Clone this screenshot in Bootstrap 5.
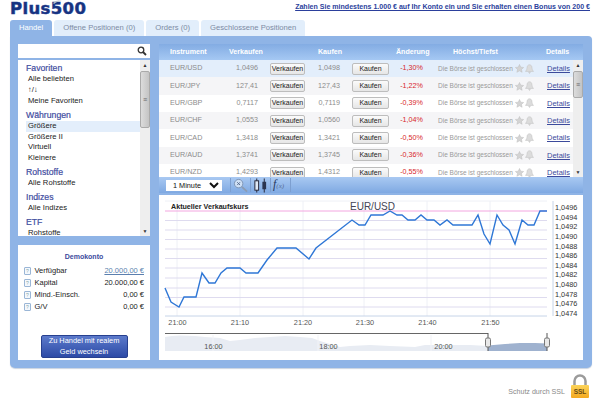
<!DOCTYPE html>
<html lang="de"><head><meta charset="utf-8"><title>Plus500</title>
<link rel="stylesheet" href="https://cdn.jsdelivr.net/npm/bootstrap@5.3.0/dist/css/bootstrap.min.css">
<style>
html,body{height:403px;overflow:hidden;background:#fff}
body{font-family:"Liberation Sans",Arial,sans-serif;font-size:7.5px;color:#222;line-height:1.2}
.topbar{height:20px;padding:0 10px 0 10px}
.logo-word{font-family:"DejaVu Sans",sans-serif;font-weight:700;font-size:16.5px;line-height:16px;letter-spacing:.35px;color:#17337f;-webkit-text-stroke:.5px #1b3b90;transform:translateY(-1px);position:relative}
.logo-swoosh{position:absolute;left:43px;top:-2px}
.promo{font-weight:700;font-size:7.05px;color:#2b3f9c;text-decoration:underline;margin-top:-5px}
.tabsrow{margin:0 0 0 10px;gap:2px;border:0;height:16px}
.tabsrow .nav-link{padding:0 9px;height:16px;line-height:16px;font-size:7.65px;color:#7d8ba3;background:#e2eefb;border:0;border-radius:3px 3px 0 0}
.tabsrow .nav-link.active{color:#fff;background:#8fb4e6}
.shell{margin:0 8px 0 10px;height:332px;background:#8fb4e6;border-radius:0 4px 5px 5px;padding:8px 9px 8px 8px;gap:9px;box-shadow:0 1px 1px #c9d3e0}
.leftcol{width:132px;gap:9px}
.searchbox{height:14px;background:#fff;padding-right:3px}
.marketlist{height:176px;margin-top:2px;background:#fff}
.marketscroll{padding:0 0 0 8px;flex:1;overflow:hidden}
.mk-head{font-size:8.7px;line-height:12px;color:#3f4d9f;-webkit-text-stroke:.2px #3f4d9f;margin-top:2.4px}
.mk-item{font-size:7.65px;line-height:10.7px;padding-left:2px;color:#222}
.mk-item.chosen{background:#e3eefb}
.vscroll{width:10px;background:#eeeeee;gap:1px}
.vscroll .arr{height:10px;font-size:5px;line-height:10px;text-align:center;color:#333}
.vthumb{background:linear-gradient(90deg,#dcdcdc,#c4c4c4);border:1px solid #aaa;border-radius:2px;color:#666;font-size:7px;line-height:7px}
.demo{flex:1;background:#fff;padding:7px 6px 2px 6px}
.demo h6{font-size:7px;font-weight:700;color:#3c4a9c;text-align:center;margin:0 0 3px;line-height:10px}
.demo-row{height:12px;font-size:7.5px;line-height:12px}
.qm{width:7px;height:8px;border:1px solid #9ab6d6;border-radius:1px;font-size:5px;line-height:6px;text-align:center;color:#8aa;margin-right:3.5px;background:#f4f8fd}
.demo-link{color:#5b7fae;text-decoration:underline}
.realbtn{width:87px;height:23px;padding:0;font-size:7.4px;line-height:10.5px;color:#fff;background:linear-gradient(#5c7acb,#2c4aa6);border:1px solid #27408f;border-radius:2px}
.realbtn:hover{color:#fff}
.rightcol{flex:1;min-width:0}
.headband{height:16px;background:linear-gradient(#83ace3,#a5c8f3);color:#fff;font-weight:700;font-size:7.1px;line-height:16px}
.hc1{margin-left:11px;width:59px}.hc2{width:89px}.hc3{width:78px}.hc4{width:57px}.hc5{width:93px}
.rates{height:117px;background:#fff;overflow:hidden}
.ratestable{margin:0;table-layout:fixed;width:414px;--bs-table-bg:transparent;--bs-border-width:0}
.ratestable td{padding:0;height:17.35px;vertical-align:middle;font-size:7.2px;color:#8c8c8c;border:0;white-space:nowrap;background:transparent;box-shadow:none}
.ratestable tr:nth-child(even) td{background:#f5f5f7}
.ratestable tr:first-child td{background:#e3eefb}
.ratestable td.pr{text-align:right;padding-right:6px}
.ratestable td.pr2{text-align:right;padding-right:7px}
.ratestable td.ins{padding-left:11px}
.ratestable td.chg{color:#d8262c;text-align:right;padding-right:12px}
.ratestable td.stat{font-size:6.5px;color:#999;padding-left:3px}
.ratestable td.det a{color:#3c4a9c;text-decoration:underline;font-size:7.5px}
.tradebtn{height:12px;line-height:10px;padding:0;font-size:7px;color:#222;background:linear-gradient(#fbfbfb,#e6e6e6);border:1px solid #bdbdbd;border-radius:2px;display:block}
.sellb{width:35px;margin-left:6px}.buyb{width:37px;margin-left:5px}
.tools{height:16px;background:linear-gradient(#a9c9f2,#7fa9e2);padding:0 0 0 7px;margin-bottom:2px}
.tfsel{width:56px;height:11px;font-size:7.3px;line-height:9px;padding:0 0 0 3px;border:0;border-radius:0;background-color:#fff;color:#111;font-family:inherit}
.tsep{width:1px;height:14px;background:#7d9fd0;margin:0 2px}
.fxmark{font-family:"Liberation Serif",serif;font-style:italic;font-size:12px;color:#26385c;line-height:14px;width:15px;white-space:nowrap}
.fxmark span{font-size:7px;color:#5a6f96}
.chartbox{flex:1;background:#fff;overflow:hidden}
.chartbox svg{display:block}
.chartbox text{font-family:"Liberation Sans",Arial,sans-serif}
.footline{height:35px;padding:6px 10px 0 0;gap:5px;color:#8a8a8a;font-size:7.1px}
.ssltext{margin-top:14px}
</style></head>
<body>
<svg width="0" height="0" class="d-none"><defs>
<symbol id="ic-star" viewBox="0 0 10 10"><path d="M5 .5l1.400 3 3.200.4-2.400 2.100.7 3.200L5 7.600 2.100 9.200l.7-3.200L.4 3.900l3.200-.4z" fill="#d4d4d4" stroke="#bbb" stroke-width=".5"/></symbol>
<symbol id="ic-bell" viewBox="0 0 10 11"><path d="M5 .8c2 0 2.800 1.700 2.800 3.700 0 2 1.200 3 1.700 3.700H.5C1 7.500 2.200 6.500 2.200 4.500 2.200 2.500 3 .8 5 .8zM4 9h2l-1 1.500z" fill="#dcdcdc" stroke="#bbb" stroke-width=".5"/></symbol>
</defs></svg>
<div class="topbar d-flex justify-content-between align-items-center">
  <div class="logo-word">Plus500<svg class="logo-swoosh" width="9" height="5" viewBox="0 0 9 5"><path d="M0 4C3 1 6 1 9 2 6 2 3 3 1 5z" fill="#b9bec6"/></svg></div>
  <a class="promo" href="#">Zahlen Sie mindestens 1.000 € auf Ihr Konto ein und Sie erhalten einen Bonus von 200 €</a>
</div>
<ul class="nav nav-tabs tabsrow">
  <li class="nav-item"><a class="nav-link active" href="#">Handel</a></li>
  <li class="nav-item"><a class="nav-link" href="#">Offene Positionen (0)</a></li>
  <li class="nav-item"><a class="nav-link" href="#">Orders (0)</a></li>
  <li class="nav-item"><a class="nav-link" href="#">Geschlossene Positionen</a></li>
</ul>
<div class="shell d-flex">
  <div class="leftcol d-flex flex-column">
    <div>
      <div class="searchbox d-flex justify-content-end align-items-center">
        <svg width="10" height="10" viewBox="0 0 10 10"><circle cx="4" cy="4" r="2.800" fill="none" stroke="#333" stroke-width="1.300"/><path d="M6 6l3 3" stroke="#333" stroke-width="1.800"/></svg>
      </div>
      <div class="marketlist d-flex">
        <div class="marketscroll">
          <div class="mk-head">Favoriten</div>
          <div class="mk-item">Alle beliebten</div>
          <div class="mk-item">↑/↓</div>
          <div class="mk-item">Meine Favoriten</div>
          <div class="mk-head">Währungen</div>
          <div class="mk-item chosen">Größere</div>
          <div class="mk-item">Größere II</div>
          <div class="mk-item">Virtuell</div>
          <div class="mk-item">Kleinere</div>
          <div class="mk-head">Rohstoffe</div>
          <div class="mk-item">Alle Rohstoffe</div>
          <div class="mk-head">Indizes</div>
          <div class="mk-item">Alle Indizes</div>
          <div class="mk-head">ETF</div>
          <div class="mk-item">Rohstoffe</div>
        </div>
        <div class="vscroll d-flex flex-column">
          <div class="arr">▲</div>
          <div class="vthumb d-flex align-items-center justify-content-center" style="height:57px">≡</div>
          <div class="flex-grow-1"></div>
          <div class="arr">▼</div>
        </div>
      </div>
    </div>
    <div class="demo d-flex flex-column">
      <h6>Demokonto</h6>
      <div class="demo-row d-flex align-items-center"><span class="qm">?</span><span class="flex-grow-1">Verfügbar</span><a class="demo-link" href="#">20.000,00 €</a></div>
      <div class="demo-row d-flex align-items-center"><span class="qm">?</span><span class="flex-grow-1">Kapital</span><span>20.000,00 €</span></div>
      <div class="demo-row d-flex align-items-center"><span class="qm">?</span><span class="flex-grow-1">Mind.-Einsch.</span><span>0,00 €</span></div>
      <div class="demo-row d-flex align-items-center"><span class="qm">?</span><span class="flex-grow-1">G/V</span><span>0,00 €</span></div>
      <div class="mt-auto text-center"><button class="btn realbtn" type="button">Zu Handel mit realem<br>Geld wechseln</button></div>
    </div>
  </div>
  <div class="rightcol d-flex flex-column">
    <div class="headband d-flex">
      <span class="hc1">Instrument</span><span class="hc2">Verkaufen</span><span class="hc3">Kaufen</span><span class="hc4">Änderung</span><span class="hc5">Höchst/Tiefst</span><span>Details</span>
    </div>
    <div class="rates d-flex">
      <table class="table ratestable">
        <colgroup><col style="width:67px"><col style="width:38px"><col style="width:46px"><col style="width:37px"><col style="width:46px"><col style="width:42px"><col style="width:112px"><col style="width:26px"></colgroup>
        <tbody>
        <tr><td class="ins">EUR/USD</td><td class="pr">1,0496</td><td><button class="btn tradebtn sellb" type="button">Verkaufen</button></td><td class="pr2">1,0498</td><td><button class="btn tradebtn buyb" type="button">Kaufen</button></td><td class="chg">-1,30%</td><td class="stat">Die Börse ist geschlossen <svg width="9" height="9"><use href="#ic-star"/></svg> <svg width="9" height="10"><use href="#ic-bell"/></svg></td><td class="det"><a href="#">Details</a></td></tr>
        <tr><td class="ins">EUR/JPY</td><td class="pr">127,41</td><td><button class="btn tradebtn sellb" type="button">Verkaufen</button></td><td class="pr2">127,43</td><td><button class="btn tradebtn buyb" type="button">Kaufen</button></td><td class="chg">-1,22%</td><td class="stat">Die Börse ist geschlossen <svg width="9" height="9"><use href="#ic-star"/></svg> <svg width="9" height="10"><use href="#ic-bell"/></svg></td><td class="det"><a href="#">Details</a></td></tr>
        <tr><td class="ins">EUR/GBP</td><td class="pr">0,7117</td><td><button class="btn tradebtn sellb" type="button">Verkaufen</button></td><td class="pr2">0,7119</td><td><button class="btn tradebtn buyb" type="button">Kaufen</button></td><td class="chg">-0,39%</td><td class="stat">Die Börse ist geschlossen <svg width="9" height="9"><use href="#ic-star"/></svg> <svg width="9" height="10"><use href="#ic-bell"/></svg></td><td class="det"><a href="#">Details</a></td></tr>
        <tr><td class="ins">EUR/CHF</td><td class="pr">1,0553</td><td><button class="btn tradebtn sellb" type="button">Verkaufen</button></td><td class="pr2">1,0560</td><td><button class="btn tradebtn buyb" type="button">Kaufen</button></td><td class="chg">-1,04%</td><td class="stat">Die Börse ist geschlossen <svg width="9" height="9"><use href="#ic-star"/></svg> <svg width="9" height="10"><use href="#ic-bell"/></svg></td><td class="det"><a href="#">Details</a></td></tr>
        <tr><td class="ins">EUR/CAD</td><td class="pr">1,3418</td><td><button class="btn tradebtn sellb" type="button">Verkaufen</button></td><td class="pr2">1,3421</td><td><button class="btn tradebtn buyb" type="button">Kaufen</button></td><td class="chg">-0,50%</td><td class="stat">Die Börse ist geschlossen <svg width="9" height="9"><use href="#ic-star"/></svg> <svg width="9" height="10"><use href="#ic-bell"/></svg></td><td class="det"><a href="#">Details</a></td></tr>
        <tr><td class="ins">EUR/AUD</td><td class="pr">1,3741</td><td><button class="btn tradebtn sellb" type="button">Verkaufen</button></td><td class="pr2">1,3745</td><td><button class="btn tradebtn buyb" type="button">Kaufen</button></td><td class="chg">-0,36%</td><td class="stat">Die Börse ist geschlossen <svg width="9" height="9"><use href="#ic-star"/></svg> <svg width="9" height="10"><use href="#ic-bell"/></svg></td><td class="det"><a href="#">Details</a></td></tr>
        <tr><td class="ins">EUR/NZD</td><td class="pr">1,4293</td><td><button class="btn tradebtn sellb" type="button">Verkaufen</button></td><td class="pr2">1,4312</td><td><button class="btn tradebtn buyb" type="button">Kaufen</button></td><td class="chg">-0,55%</td><td class="stat">Die Börse ist geschlossen <svg width="9" height="9"><use href="#ic-star"/></svg> <svg width="9" height="10"><use href="#ic-bell"/></svg></td><td class="det"><a href="#">Details</a></td></tr>
        </tbody>
      </table>
      <div class="vscroll d-flex flex-column">
        <div class="arr">▲</div>
        <div class="vthumb d-flex align-items-center justify-content-center" style="height:27px">≡</div>
        <div class="flex-grow-1"></div>
        <div class="arr">▼</div>
      </div>
    </div>
    <div class="tools d-flex align-items-center">
      <select class="tfsel"><option>1 Minute</option></select>
      <span class="tsep ms-2"></span>
      <svg width="15" height="15" viewBox="0 0 16 15"><circle cx="6" cy="5.500" r="4.500" fill="#cfe0f5" stroke="#7d93b3"/><path d="M4.500 4l3 3M7.500 4l-3 3" stroke="#55688a"/><path d="M9.500 9l5.500 5" stroke="#8c9cb3" stroke-width="2"/></svg>
      <span class="tsep"></span>
      <svg width="15" height="15" viewBox="0 0 16 15"><path d="M4 0v15M12 0v15" stroke="#223"/><rect x="2" y="2.500" width="4" height="10" fill="#dfe9f6" stroke="#223"/><rect x="10" y="3.500" width="4" height="8" fill="#2a3550"/></svg>
      <span class="tsep"></span>
      <span class="fxmark">f<span>(x)</span></span>
      <span class="tsep"></span>
    </div>
    <div class="chartbox">
      <svg width="424" height="165" viewBox="159 195 424 165">
        <g stroke="#eef0f6" fill="none"><path d="M177 201V316M240 201V316M303 201V316M364 201V316M427 201V316M490 201V316"/><path d="M165 201H547"/></g>
        <g stroke="#dedbef" fill="none"><path d="M165 220.500H547M165 230H547M165 239.500H547M165 249H547M165 258.500H547M165 268H547M165 278H547M165 288H547M165 297.500H547M165 307H547"/></g>
        <path d="M165 316H547M553 201V316" stroke="#c6d4e8" fill="none"/>
        <path d="M165 211H547" stroke="#f3a6e0"/>
        <polyline fill="none" stroke="#2f77d6" stroke-width="1.400" points="165,288 171,302 179,307 184,297 196,297 202,273 209,283 215,283 221,273 227,268 240,268 246,273 258,273 267,260 277,248 296,248 309,259 316,248 352,220 359,225 365,225 371,215 383,215 390,211 397,215 402,215 408,220 415,220 421,215 427,220 434,220 440,225 447,220 453,225 472,225 478,215 484,234 490,244 497,215 503,225 509,230 515,244 522,220 528,225 534,225 540,211 547,211"/>
        <text x="171" y="209" font-size="7.150" font-weight="700" fill="#222">Aktueller Verkaufskurs</text>
        <text x="350" y="210" font-size="10" fill="#445">EUR/USD</text>
        <g font-size="7.300" fill="#333">
          <text x="555" y="210">1,0496</text><text x="555" y="219.700">1,0494</text><text x="555" y="229.300">1,0492</text><text x="555" y="238.900">1,0490</text><text x="555" y="248.500">1,0488</text><text x="555" y="258.200">1,0486</text><text x="555" y="267.800">1,0484</text><text x="555" y="277.400">1,0482</text><text x="555" y="287">1,0480</text><text x="555" y="296.600">1,0478</text><text x="555" y="306.200">1,0476</text><text x="555" y="315.800">1,0474</text>
        </g>
        <g font-size="7.300" fill="#555" text-anchor="middle">
          <text x="177.500" y="325">21:00</text><text x="240" y="325">21:10</text><text x="303" y="325">21:20</text><text x="365" y="325">21:30</text><text x="427.500" y="325">21:40</text><text x="490.500" y="325">21:50</text>
        </g>
        <path d="M165 337L172 336 180 335.500 195 336 205 337 220 338 230 341 240 340 255 338 270 337 285 336 300 337 312 338 320 341 340 347 350 346 370 345 390 346 415 347 425 345 450 345 470 345 488 346V351H165z" fill="#e8ecf3"/>
        <path d="M488 345.500L505 344 520 343 535 343 547 343.500V351H488z" fill="#9fb2cf"/>
        <path d="M165 333.500H488" stroke="#666"/>
        <path d="M213 335V351M318 335V351M431 335V351" stroke="#f2f3f7"/>
        <g font-size="7.300" fill="#555" text-anchor="middle"><text x="213.500" y="349">16:00</text><text x="328.500" y="349">18:00</text><text x="443.500" y="349">20:00</text></g>
        <path d="M488 333V351M547 333V351" stroke="#555"/>
        <rect x="485.500" y="338" width="5" height="9" rx="1.500" fill="#e8e8e8" stroke="#777"/><rect x="544.500" y="338" width="5" height="9" rx="1.500" fill="#e8e8e8" stroke="#777"/>
      </svg>
    </div>
  </div>
</div>
<div class="footline d-flex justify-content-end">
  <span class="ssltext">Schutz durch SSL</span>
  <svg width="20" height="26" viewBox="0 0 20 26"><defs><linearGradient id="lockfill" x1="0" y1="0" x2="0" y2="1"><stop offset="0" stop-color="#fbd45a"/><stop offset="1" stop-color="#f4a81f"/></linearGradient></defs><path d="M4.500 12V7a5.500 5.500 0 0 1 11 0v5" fill="none" stroke="#9b9b9b" stroke-width="2.500"/><rect x="1" y="11" width="18" height="13" rx="1" fill="url(#lockfill)"/><text x="10" y="20" text-anchor="middle" font-size="6.500" font-weight="700" fill="#6a4a10" font-family="Liberation Sans">SSL</text></svg>
</div>
</body></html>
